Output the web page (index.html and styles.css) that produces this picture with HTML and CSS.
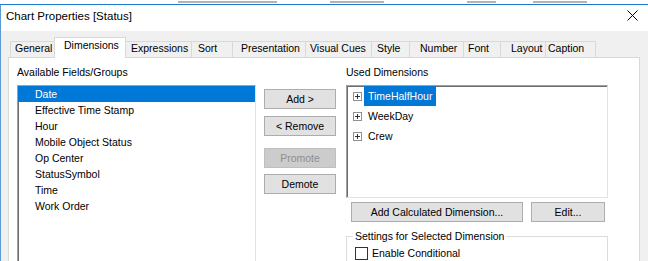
FILE: index.html
```html
<!DOCTYPE html>
<html lang="en">
<head>
    <meta charset="utf-8">
    <title>Chart Properties [Status]</title>
    <link rel="stylesheet" href="styles.css">
</head>
<body>
<div class="backdrop">
    <span class="ghost g1"></span>
    <span class="ghost g2"></span>
    <span class="ghost g3"></span>
    <span class="ghost g4"></span>
</div>
<div class="window">
    <div class="titlebar">
        <span class="title">Chart Properties [Status]</span>
        <svg class="close" width="11" height="11" viewBox="0 0 11 11">
            <path d="M0.5 0.5 L10.5 10.5 M10.5 0.5 L0.5 10.5" stroke="#000" stroke-width="1" fill="none"/>
        </svg>
    </div>
    <div class="dialog">
        <div class="tabs">
            <div class="tab t-general">General</div>
            <div class="tab selected t-dimensions">Dimensions</div>
            <div class="tab t-expressions">Expressions</div>
            <div class="tab t-sort">Sort</div>
            <div class="tab t-presentation">Presentation</div>
            <div class="tab t-cues">Visual Cues</div>
            <div class="tab t-style">Style</div>
            <div class="tab t-number">Number</div>
            <div class="tab t-font">Font</div>
            <div class="tab t-layout">Layout</div>
            <div class="tab last t-caption">Caption</div>
        </div>
        <div class="page">
            <div class="col-fields">
                <div class="label">Available Fields/Groups</div>
                <ul class="listbox">
                    <li class="selected">Date</li>
                    <li>Effective Time Stamp</li>
                    <li>Hour</li>
                    <li>Mobile Object Status</li>
                    <li>Op Center</li>
                    <li>StatusSymbol</li>
                    <li>Time</li>
                    <li>Work Order</li>
                </ul>
            </div>
            <div class="col-buttons">
                <button class="btn b-add">Add &gt;</button>
                <button class="btn b-remove">&lt; Remove</button>
                <button class="btn b-promote" disabled>Promote</button>
                <button class="btn b-demote">Demote</button>
            </div>
            <div class="col-used">
                <div class="label">Used Dimensions</div>
                <ul class="tree">
                    <li>
                        <svg class="plus" width="9" height="9" viewBox="0 0 9 9">
                            <rect x="0.5" y="0.5" width="8" height="8" fill="#fff" stroke="#919191"/>
                            <path d="M2 4.5 H7 M4.5 2 V7" stroke="#333" stroke-width="1"/>
                        </svg>
                        <span class="node selected">TimeHalfHour</span>
                    </li>
                    <li>
                        <svg class="plus" width="9" height="9" viewBox="0 0 9 9">
                            <rect x="0.5" y="0.5" width="8" height="8" fill="#fff" stroke="#919191"/>
                            <path d="M2 4.5 H7 M4.5 2 V7" stroke="#333" stroke-width="1"/>
                        </svg>
                        <span class="node">WeekDay</span>
                    </li>
                    <li>
                        <svg class="plus" width="9" height="9" viewBox="0 0 9 9">
                            <rect x="0.5" y="0.5" width="8" height="8" fill="#fff" stroke="#919191"/>
                            <path d="M2 4.5 H7 M4.5 2 V7" stroke="#333" stroke-width="1"/>
                        </svg>
                        <span class="node">Crew</span>
                    </li>
                </ul>
                <div class="tree-actions">
                    <button class="btn b-calc">Add Calculated Dimension...</button>
                    <button class="btn b-edit">Edit...</button>
                </div>
                <fieldset class="settings">
                    <legend>Settings for Selected Dimension</legend>
                    <div class="check-row">
                        <span class="checkbox"></span>
                        <span>Enable Conditional</span>
                    </div>
                </fieldset>
            </div>
        </div>
    </div>
</div>
</body>
</html>
```

FILE: styles.css
```css
body {
    margin: 0;
    width: 648px;
    height: 261px;
    overflow: hidden;
    background-color: #f0f0f0;
    font-family: 'Liberation Sans', Arial, sans-serif;
    font-size: 10.5px;
    color: #000;
}
ul {
    list-style: none;
    margin: 0;
    padding: 0;
}

/* strip of the app behind the dialog */
.backdrop {
    display: flex;
    align-items: flex-end;
    height: 4px;
    overflow: hidden;
    background-color: #fff;
}
.ghost {
    flex: none;
    height: 2px;
    margin-bottom: 1px;
    background-color: #b4b4b4;
}
.g1 { margin-left: 178px; width: 99px; }
.g2 { margin-left: 53px; width: 54px; }
.g3 { margin-left: 83px; width: 29px; }
.g4 { margin-left: 37px; width: 54px; }

.window {
    border-top: 1px solid #1979ca;
    border-left: 1px solid #5b9bd5;
}
.titlebar {
    display: flex;
    justify-content: space-between;
    align-items: flex-start;
    height: 26px;
    padding: 0 10px 0 5px;
    background-color: #fff;
}
.title {
    font-size: 11.5px;
    line-height: 22px;
}
.close {
    margin-top: 5px;
}

.dialog {
    padding: 6px 0 0 7px;
}

/* tab strip */
.tabs {
    display: flex;
    align-items: flex-end;
    height: 20px;
    padding-left: 2px;
    position: relative;
    z-index: 1;
}
.tab {
    flex: none;
    box-sizing: border-box;
    height: 16px;
    border-top: 1px solid #d9d9d9;
    border-left: 1px solid #d9d9d9;
    background-color: #f0f0f0;
    line-height: 13px;
    white-space: nowrap;
}
.tab.last {
    border-right: 1px solid #d9d9d9;
}
.tab.selected {
    height: 21px;
    margin: 0 -2px -1px;
    border-right: 1px solid #d9d9d9;
    background-color: #fff;
    line-height: 15px;
    position: relative;
    z-index: 2;
}
.t-general { width: 46px; padding-left: 4px; }
.t-dimensions { width: 72px; padding-left: 9px; }
.t-expressions { width: 67px; padding-left: 6px; }
.t-sort { width: 41px; padding-left: 6px; }
.t-presentation { width: 73px; padding-left: 8px; }
.t-cues { width: 66px; padding-left: 4px; }
.t-style { width: 38px; padding-left: 5px; }
.t-number { width: 54px; padding-left: 10px; }
.t-font { width: 37px; padding-left: 4px; }
.t-layout { width: 45px; padding-left: 10px; }
.t-caption { width: 51px; padding-left: 2px; }

/* tab page */
.page {
    display: flex;
    box-sizing: border-box;
    width: 632px;
    height: 205px;
    padding: 7px 0 0 8px;
    border: 1px solid #d9d9d9;
    border-bottom: 0;
    background-color: #fff;
    overflow: hidden;
}
.label {
    height: 14px;
    line-height: 14px;
}
.col-fields {
    width: 239px;
}
.col-buttons {
    width: 72px;
    margin-left: 8px;
}
.col-used {
    width: 262px;
    margin-left: 10px;
}

.listbox,
.tree {
    box-sizing: border-box;
    margin-top: 6px;
    border: 1px solid;
    border-color: #a0a0a0 #e3e3e3 #e3e3e3 #a0a0a0;
    box-shadow: inset 1px 1px 0 #6d6d6d;
    background-color: #fff;
}
.listbox {
    height: 190px;
}
.listbox li {
    height: 16px;
    line-height: 16px;
    padding-left: 17px;
    white-space: nowrap;
}
.listbox li.selected {
    background-color: #0078d7;
    color: #fff;
}

.tree {
    height: 113px;
}
.tree li {
    display: flex;
    align-items: center;
    height: 20px;
    padding-left: 6px;
}
.plus {
    flex: none;
    margin-right: 2px;
}
.node {
    padding: 0 4px;
    line-height: 20px;
}
.node.selected {
    background-color: #0078d7;
    color: #fff;
}

.btn {
    display: block;
    box-sizing: border-box;
    width: 72px;
    height: 20px;
    padding: 0;
    border: 1px solid #adadad;
    background-color: #e1e1e1;
    font: inherit;
    line-height: 18px;
    color: #000;
    text-align: center;
}
.btn:disabled {
    border-color: #bfbfbf;
    background-color: #cccccc;
    color: #8e8e8e;
}
.b-add { margin-top: 24px; }
.b-remove { margin-top: 7px; }
.b-promote { margin-top: 12px; }
.b-demote { margin-top: 6px; }

.tree-actions {
    display: flex;
    gap: 8px;
    margin-top: 4px;
    padding-left: 5px;
}
.b-calc { width: 172px; }
.b-edit { width: 74px; }

.settings {
    height: 40px;
    margin: 7px 0 0;
    padding: 4px 8px 0;
    border: 1px solid #dcdcdc;
}
.settings legend {
    margin-left: -2px;
    padding: 0 2px;
    line-height: 14px;
}
.check-row {
    display: flex;
    align-items: center;
    gap: 4px;
    line-height: 13px;
}
.checkbox {
    box-sizing: border-box;
    width: 13px;
    height: 13px;
    border: 1px solid #333;
    background-color: #fff;
}
```
